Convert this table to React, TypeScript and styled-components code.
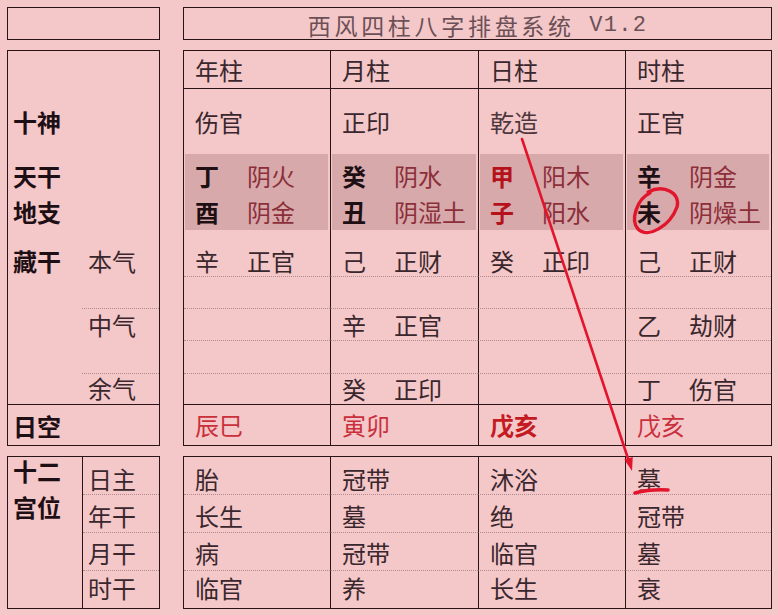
import React from 'react';
import styled, { createGlobalStyle } from 'styled-components';

const C = {
  bg: '#f4c7c9',
  border: '#2b1418',
  shade: '#d7a9ab',
  dot: '#b08a90',
  ink: '#1e0f14',
  text: '#3a272d',
  soft: '#4d383d',
  element: '#8c2f3a',
  red: '#c9303c',
  deepRed: '#b5121c',
  title: '#6b5056',
  mark: '#e2152c',
};

const Global = createGlobalStyle`
  html, body { margin: 0; padding: 0; background: ${C.bg}; }
  body { font-family: "Noto Sans CJK SC", "Noto Sans", sans-serif; }
`;

const shift = (pt: number) => (pt >= 0 ? `padding-top: ${pt}px;` : `padding-bottom: ${-pt}px;`);

const Page = styled.div`
  position: relative;
  width: 778px;
  height: 615px;
  box-sizing: border-box;
  padding: 7px 0 0 7px;
  display: grid;
  grid-template-columns: 153px 589px;
  grid-template-rows: 33px 396px 153px;
  column-gap: 23px;
  row-gap: 10px;
  background: ${C.bg};
`;

const Frame = styled.div`
  box-sizing: border-box;
  border: 1px solid ${C.border};
`;

const TitleBox = styled(Frame)`
  display: flex;
  align-items: center;
  justify-content: center;
  padding-top: 4px;
  font-size: 23px;
  letter-spacing: 3.7px;
  color: ${C.title};
  line-height: 1;
  white-space: pre;
`;

const Version = styled.span`
  font-family: "Liberation Mono", monospace;
  font-size: 22px;
  letter-spacing: 1.3px;
`;

/* ---------- left panels ---------- */

const SidePanel = styled(Frame)`
  display: flex;
  flex-direction: column;
`;

const SideRow = styled.div<{ $h: number; $pt?: number }>`
  box-sizing: border-box;
  height: ${(p) => p.$h}px;
  ${(p) => shift(p.$pt ?? 0)}
  padding-left: 5px;
  display: flex;
  align-items: center;
  line-height: 28px;
  font-size: 24px;
  font-weight: 700;
  color: ${C.ink};
`;

const SideShade = styled.div`
  height: 76px;
  box-sizing: border-box;
  padding-top: 3px;
  display: flex;
  flex-direction: column;
`;

const SideLine = styled.div`
  height: 36px;
  padding-left: 5px;
  display: flex;
  align-items: center;
  font-size: 24px;
  font-weight: 700;
  color: ${C.ink};
`;

const HiddenBlock = styled.div`
  box-sizing: border-box;
  height: 175px;
  display: grid;
  grid-template-columns: 74px 77px;
  grid-template-rows: 79px 65px 30px;
  border-bottom: 1px solid ${C.border};
`;

const HiddenLabel = styled.div`
  grid-row: 1 / 4;
  padding: 15px 0 0 5px;
  line-height: 32px;
  font-size: 24px;
  font-weight: 700;
  color: ${C.ink};
`;

const SubLabel = styled.div<{ $dotted?: boolean; $pt?: number; $lh?: number }>`
  box-sizing: border-box;
  padding: ${(p) => p.$pt ?? 0}px 0 0 6px;
  line-height: ${(p) => p.$lh ?? 32}px;
  font-size: 24px;
  color: ${C.text};
  ${(p) => (p.$dotted ? `border-bottom: 1px dotted ${C.dot};` : '')}
`;

const PalaceBox = styled(Frame)`
  display: grid;
  grid-template-columns: 74px 77px;
`;

const PalaceLabel = styled.div`
  margin-top: -4px;
  padding-left: 5px;
  line-height: 36px;
  font-size: 24px;
  font-weight: 700;
  color: ${C.ink};
`;

const PalaceList = styled.div`
  border-left: 1px solid ${C.border};
  display: grid;
  grid-template-rows: 38px 38px 38px 37px;
`;

const PalaceItem = styled.div<{ $pt: number }>`
  box-sizing: border-box;
  ${(p) => shift(p.$pt)}
  padding-left: 5px;
  display: flex;
  align-items: center;
  line-height: 28px;
  font-size: 24px;
  color: ${C.text};
  &:not(:last-child) {
    border-bottom: 1px dotted ${C.dot};
  }
`;

/* ---------- main table ---------- */

const Table = styled(Frame)`
  display: flex;
  flex-direction: column;
`;

const Row = styled.div<{ $h: number; $line?: boolean }>`
  box-sizing: border-box;
  height: ${(p) => p.$h}px;
  display: grid;
  grid-template-columns: 146px 148px 147px 146px;
  ${(p) => (p.$line ? `border-bottom: 1px solid ${C.border};` : '')}
`;

const Cell = styled.div<{ $dotted?: boolean; $pt?: number; $color?: string; $bold?: boolean }>`
  box-sizing: border-box;
  display: flex;
  align-items: center;
  padding-left: 11px;
  ${(p) => shift(p.$pt ?? 0)}
  line-height: 28px;
  font-size: 24px;
  font-weight: ${(p) => (p.$bold ? 700 : 400)};
  color: ${(p) => p.$color ?? C.text};
  & + & {
    border-left: 1px solid ${C.border};
  }
  ${(p) => (p.$dotted ? `border-bottom: 1px dotted ${C.dot};` : '')}
`;

const ShadeCell = styled.div`
  box-sizing: border-box;
  & + & {
    border-left: 1px solid ${C.border};
  }
`;

const Shade = styled.div`
  height: 100%;
  margin: 0 2px 0 1px;
  box-sizing: border-box;
  padding-top: 3px;
  background: ${C.shade};
  display: flex;
  flex-direction: column;
`;

const Pair = styled.div<{ $inset?: number; $fixed?: boolean }>`
  height: ${(p) => (p.$fixed ? '36px' : 'auto')};
  box-sizing: border-box;
  padding-left: ${(p) => p.$inset ?? 10}px;
  display: grid;
  grid-template-columns: 52px auto;
  align-items: center;
  font-size: 24px;
`;

const Branch = styled.span<{ $red?: boolean }>`
  font-weight: 700;
  color: ${(p) => (p.$red ? C.deepRed : C.ink)};
`;

const Element = styled.span`
  color: ${C.element};
`;

const Plain = styled.span``;

const Overlay = styled.svg`
  position: absolute;
  left: 0;
  top: 0;
  pointer-events: none;
`;

/* ---------- data ---------- */

const pillars = ['年柱', '月柱', '日柱', '时柱'];
const gods = ['伤官', '正印', '乾造', '正官'];
const stems: [string, string, boolean][] = [
  ['丁', '阴火', false],
  ['癸', '阴水', false],
  ['甲', '阳木', true],
  ['辛', '阴金', false],
];
const branches: [string, string, boolean][] = [
  ['酉', '阴金', false],
  ['丑', '阴湿土', false],
  ['子', '阳水', true],
  ['未', '阴燥土', false],
];
type Hid = [string, string] | null;
const hidden: Hid[][] = [
  [['辛', '正官'], null, null, null, null],
  [['己', '正财'], null, ['辛', '正官'], null, ['癸', '正印']],
  [['癸', '正印'], null, null, null, null],
  [['己', '正财'], null, ['乙', '劫财'], null, ['丁', '伤官']],
];
const hiddenHeights = [47, 32, 32, 33, 31];
const hiddenShift = [16, 0, 0, 0, -1];
const voids: { t: string; bold?: boolean }[] = [
  { t: '辰巳' },
  { t: '寅卯' },
  { t: '戊亥', bold: true },
  { t: '戊亥' },
];
const palaces = [
  ['胎', '长生', '病', '临官'],
  ['冠带', '墓', '冠带', '养'],
  ['沐浴', '绝', '临官', '长生'],
  ['墓', '冠带', '墓', '衰'],
];
const palaceHeights = [38, 38, 38, 37];
const palaceShift = [6, 4, 2, -4];

export default function App() {
  return (
    <>
      <Global />
      <Page>
        <Frame />
        <TitleBox>
          西风四柱八字排盘系统<Version> V1.2</Version>
        </TitleBox>

        <SidePanel>
          <SideRow $h={38} />
          <SideRow $h={65} $pt={0}>十神</SideRow>
          <SideShade>
            <SideLine>天干</SideLine>
            <SideLine>地支</SideLine>
          </SideShade>
          <HiddenBlock>
            <HiddenLabel>藏干</HiddenLabel>
            <SubLabel $dotted $pt={15}>本气</SubLabel>
            <SubLabel $dotted $pt={0}>中气</SubLabel>
            <SubLabel $pt={0} $lh={28}>余气</SubLabel>
          </HiddenBlock>
          <SideRow $h={40} $pt={2}>日空</SideRow>
        </SidePanel>

        <Table>
          <Row $h={38} $line>
            {pillars.map((p) => (
              <Cell key={p} $pt={0} $color={C.text}>
                {p}
              </Cell>
            ))}
          </Row>
          <Row $h={65}>
            {gods.map((g, i) => (
              <Cell key={i} $pt={1} $color={i === 2 ? C.soft : C.text}>
                {g}
              </Cell>
            ))}
          </Row>
          <Row $h={76}>
            {stems.map((s, i) => (
              <ShadeCell key={i}>
                <Shade>
                  <Pair $fixed>
                    <Branch $red={s[2]}>{s[0]}</Branch>
                    <Element>{s[1]}</Element>
                  </Pair>
                  <Pair $fixed>
                    <Branch $red={branches[i][2]}>{branches[i][0]}</Branch>
                    <Element>{branches[i][1]}</Element>
                  </Pair>
                </Shade>
              </ShadeCell>
            ))}
          </Row>
          {hiddenHeights.map((h, r) => (
            <Row key={r} $h={h} $line={r === 4}>
              {hidden.map((col, c) => {
                const v = col[r];
                return (
                  <Cell key={c} $dotted={r < 4} $pt={hiddenShift[r]}>
                    {v && (
                      <Pair $inset={0}>
                        <Plain>{v[0]}</Plain>
                        <Plain>{v[1]}</Plain>
                      </Pair>
                    )}
                  </Cell>
                );
              })}
            </Row>
          ))}
          <Row $h={40}>
            {voids.map((v, i) => (
              <Cell key={i} $pt={-1} $bold={v.bold} $color={v.bold ? '#c41a22' : C.red}>
                {v.t}
              </Cell>
            ))}
          </Row>
        </Table>

        <PalaceBox>
          <PalaceLabel>
            十二
            <br />
            宫位
          </PalaceLabel>
          <PalaceList>
            {['日主', '年干', '月干', '时干'].map((t, i) => (
              <PalaceItem key={t} $pt={palaceShift[i]}>
                {t}
              </PalaceItem>
            ))}
          </PalaceList>
        </PalaceBox>

        <Table>
          {palaceHeights.map((h, r) => (
            <Row key={r} $h={h}>
              {palaces.map((col, c) => (
                <Cell key={c} $dotted={r < 3} $pt={palaceShift[r]}>
                  {col[r]}
                </Cell>
              ))}
            </Row>
          ))}
        </Table>

        <Overlay width={778} height={615} viewBox="0 0 778 615">
          <line x1={522} y1={139} x2={628.5} y2={460} stroke={C.mark} strokeWidth={2.6} strokeLinecap="round" />
          <polygon points="632,471 624.3,459.6 632.8,456.9" fill={C.mark} />
          <path
            d="M 650 193 C 637 199, 630 220, 638 229 C 648 239, 670 226, 677 207 C 681 193, 664 184, 648 192"
            fill="none"
            stroke={C.mark}
            strokeWidth={3.4}
            strokeLinecap="round"
          />
          <path d="M 635 493 Q 650 489, 668 490" fill="none" stroke={C.mark} strokeWidth={3.6} strokeLinecap="round" />
        </Overlay>
      </Page>
    </>
  );
}
